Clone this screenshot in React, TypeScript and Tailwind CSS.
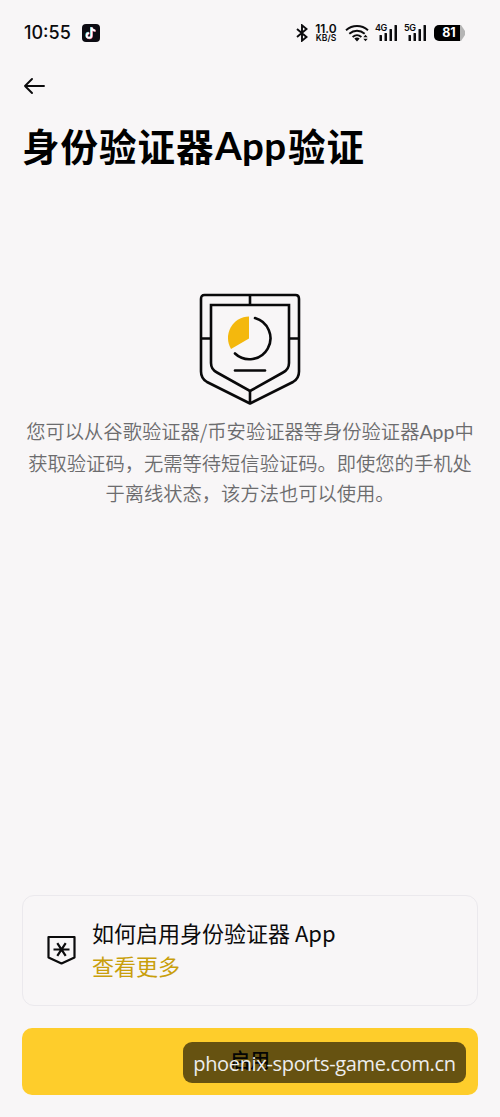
import React from 'react';

const cjk = "font-['Noto_Sans_CJK_SC',sans-serif]";

function StatusBar() {
  return (
    <header className="flex h-[66px] items-center pl-6 pr-[35px] text-[#0b0b0d]">
      <span className="w-[58px] whitespace-nowrap font-['Inter',sans-serif] text-[18px] font-medium leading-5">10:55</span>
      <svg className="h-[18px] w-[18px]" viewBox="0 0 18 18">
        <rect width="18" height="18" rx="4" fill="#0c0b12" />
        <path d="M9.5 3.4v8.1a2.4 2.4 0 1 1-2.4-2.4M9.5 3.4c.3 2 1.6 3.2 3.8 3.3" fill="none" stroke="#61d6db" strokeWidth="1.9" transform="translate(-.5 -.3)" />
        <path d="M9.5 3.4v8.1a2.4 2.4 0 1 1-2.4-2.4M9.5 3.4c.3 2 1.6 3.2 3.8 3.3" fill="none" stroke="#e56a87" strokeWidth="1.9" transform="translate(.5 .3)" />
        <path d="M9.5 3.4v8.1a2.4 2.4 0 1 1-2.4-2.4M9.5 3.4c.3 2 1.6 3.2 3.8 3.3" fill="none" stroke="#fff" strokeWidth="1.7" />
      </svg>
      <div className="ml-auto flex items-center">
        <svg className="h-[18px] w-[12px]" viewBox="0 0 12 18" fill="none" stroke="currentColor" strokeWidth="1.9">
          <path d="M1 5l9.5 8L6 16.7V1.3L10.5 5 1 13" />
        </svg>
        <div className="ml-[6px] flex w-[24px] flex-col items-center whitespace-nowrap font-['Inter',sans-serif] font-semibold">
          <span className="text-[12px] leading-[10px]">11.0</span>
          <span className="text-[8.5px] leading-[8px]">KB/S</span>
        </div>
        <svg className="ml-[7px] h-[18px] w-[25px]" viewBox="0 0 25 18" fill="none" stroke="currentColor" strokeWidth="1.9">
          <path d="M1 6.2c6.4-5.6 15.600-5.600 22 0M4.300 9.700c4.600-4 10.800-4 15.400 0M7.600 13c2.700-2.300 6.100-2.300 8.800 0" />
          <path d="M9.300 14.600q2.700-2 5.400 0L12 17.400zM18.300 13.300l2.200-2.500 2.200 2.500zM18.300 14.700l2.200 2.500 2.200-2.500z" fill="currentColor" stroke="none" />
        </svg>
        {['4G', '5G'].map((label) => (
          <div key={label} className="relative ml-[5px] h-[20px] w-[24px]">
            <span className="absolute left-0 top-0 font-['Inter',sans-serif] text-[9px] font-semibold leading-[9px] tracking-[-.5px]">{label}</span>
            <svg className="h-[20px] w-[24px]" viewBox="0 0 24 20" fill="currentColor">
              <rect x="4.500" y="12" width="2.500" height="6" rx=".5" /><rect x="9.500" y="10" width="2.500" height="8" rx=".5" />
              <rect x="14.500" y="6" width="2.500" height="12" rx=".5" /><rect x="19.500" y="2" width="2.500" height="16" rx=".5" />
            </svg>
          </div>
        ))}
        <div className="ml-[6px] flex items-center">
          <span className="flex h-4 w-[26px] items-center justify-center rounded-l-[5px] bg-black pl-1 font-['Inter',sans-serif] text-[12.5px] font-bold text-white">81</span>
          <svg className="h-4 w-[5px]" viewBox="0 0 5 16"><path d="M0 0h1l4 6v4l-4 6H0z" fill="#b5b5b5" /></svg>
        </div>
      </div>
    </header>
  );
}

function ShieldArt() {
  return (
    <svg className="mx-auto block h-[112px] w-[102px]" viewBox="0 0 102 112" fill="none" stroke="#09090a" strokeWidth="2.600">
      <path d="M5.500 2h91Q100 2 100 6v72.500q0 7-6 10.500L51 110.500 8 89q-6-3.500-6-10.500V6q0-4 3.500-4z" strokeLinejoin="round" />
      <path d="M12 12h78v58q0 6.500-6 9.500L51 98 18 79.500q-6-3-6-9.500z" />
      <path d="M51 2v10M51 98v12M2 45.500h10M90 45.500h10" />
      <path d="M56 25a21 21 0 1 1-20 35.500" strokeLinecap="round" />
      <path d="M36 77.500h30" strokeLinecap="round" />
      <path d="M50 23.500v22L32 56A21.500 21.500 0 0 1 50 23.500z" fill="#f4b80d" stroke="none" />
    </svg>
  );
}

export default function App() {
  return (
    <main className={`${cjk} flex h-[1117px] w-[500px] flex-col overflow-hidden bg-[#f8f6f7] text-[#0b0b0c]`}>
      <StatusBar />
      <button aria-label="返回" className="ml-6 mt-[11px] h-[18px] w-[22px]">
        <svg className="h-[18px] w-[22px]" viewBox="0 0 22 18" fill="none" stroke="currentColor" strokeWidth="1.900" strokeLinecap="round" strokeLinejoin="round">
          <path d="M8 2L1 9l7 7M1 9h19" />
        </svg>
      </button>
      <h1 className="ml-[22px] mt-[22px] flex h-14 items-center whitespace-nowrap text-[37.500px] font-bold text-black">
        <span className="w-[193px] tracking-[1px]">身份验证器</span>
        <span className="w-[73px] pt-[2px] font-['Lato',sans-serif] text-[38.500px] tracking-[.400px]">App</span>
        <span className="tracking-[1px]">验证</span>
      </h1>
      <section className="mt-[120px]">
        <ShieldArt />
        <div className="mt-[11px] flex flex-col items-center whitespace-nowrap text-[19.300px] font-[350] leading-[30.500px] text-[#6c6c6e]">
          <p>您可以从谷歌验证器/币安验证器等身份验证器<span className="font-['Lato',sans-serif] text-[19.500px] font-normal">App</span>中</p>
          <p>获取验证码，无需等待短信验证码。即使您的手机处</p>
          <p>于离线状态，该方法也可以使用。</p>
        </div>
      </section>
      <section className="mx-[22px] mb-[22px] mt-auto flex h-[111px] items-center rounded-[12px] border border-[#ebe9ed] pl-6">
        <svg className="-mt-[2px] h-[30px] w-[30px]" viewBox="0 0 30 30" fill="none" stroke="currentColor" strokeWidth="2.200">
          <path d="M1.500 2h26v20.500l-13 6-13-6z" strokeLinejoin="round" />
          <path d="M6.500 14.500h16M10.300 8.200l8.400 12.600M18.700 8.200l-8.400 12.600" />
        </svg>
        <div className="-mt-[4px] ml-[15px] whitespace-nowrap text-[22px] leading-[33px]">
          <p>如何启用身份验证器 App</p>
          <a className="text-[#c99f0c]">查看更多</a>
        </div>
      </section>
      <div className="relative mx-[22px] mb-[22px] h-[67px] shrink-0">
        <button className="block h-full w-full rounded-[10px] bg-[#fecd2b] pb-[3px] text-[20px] font-medium">启用</button>
        <div className="absolute left-[161px] top-[14px] flex h-[41px] w-[283px] items-center justify-center whitespace-nowrap rounded-[9px] bg-black/60 pt-[2px] font-['Open_Sans',sans-serif] text-[20px] tracking-[-.340px] text-[#ededed]">
          phoenix-sports-game.com.cn
        </div>
      </div>
    </main>
  );
}
